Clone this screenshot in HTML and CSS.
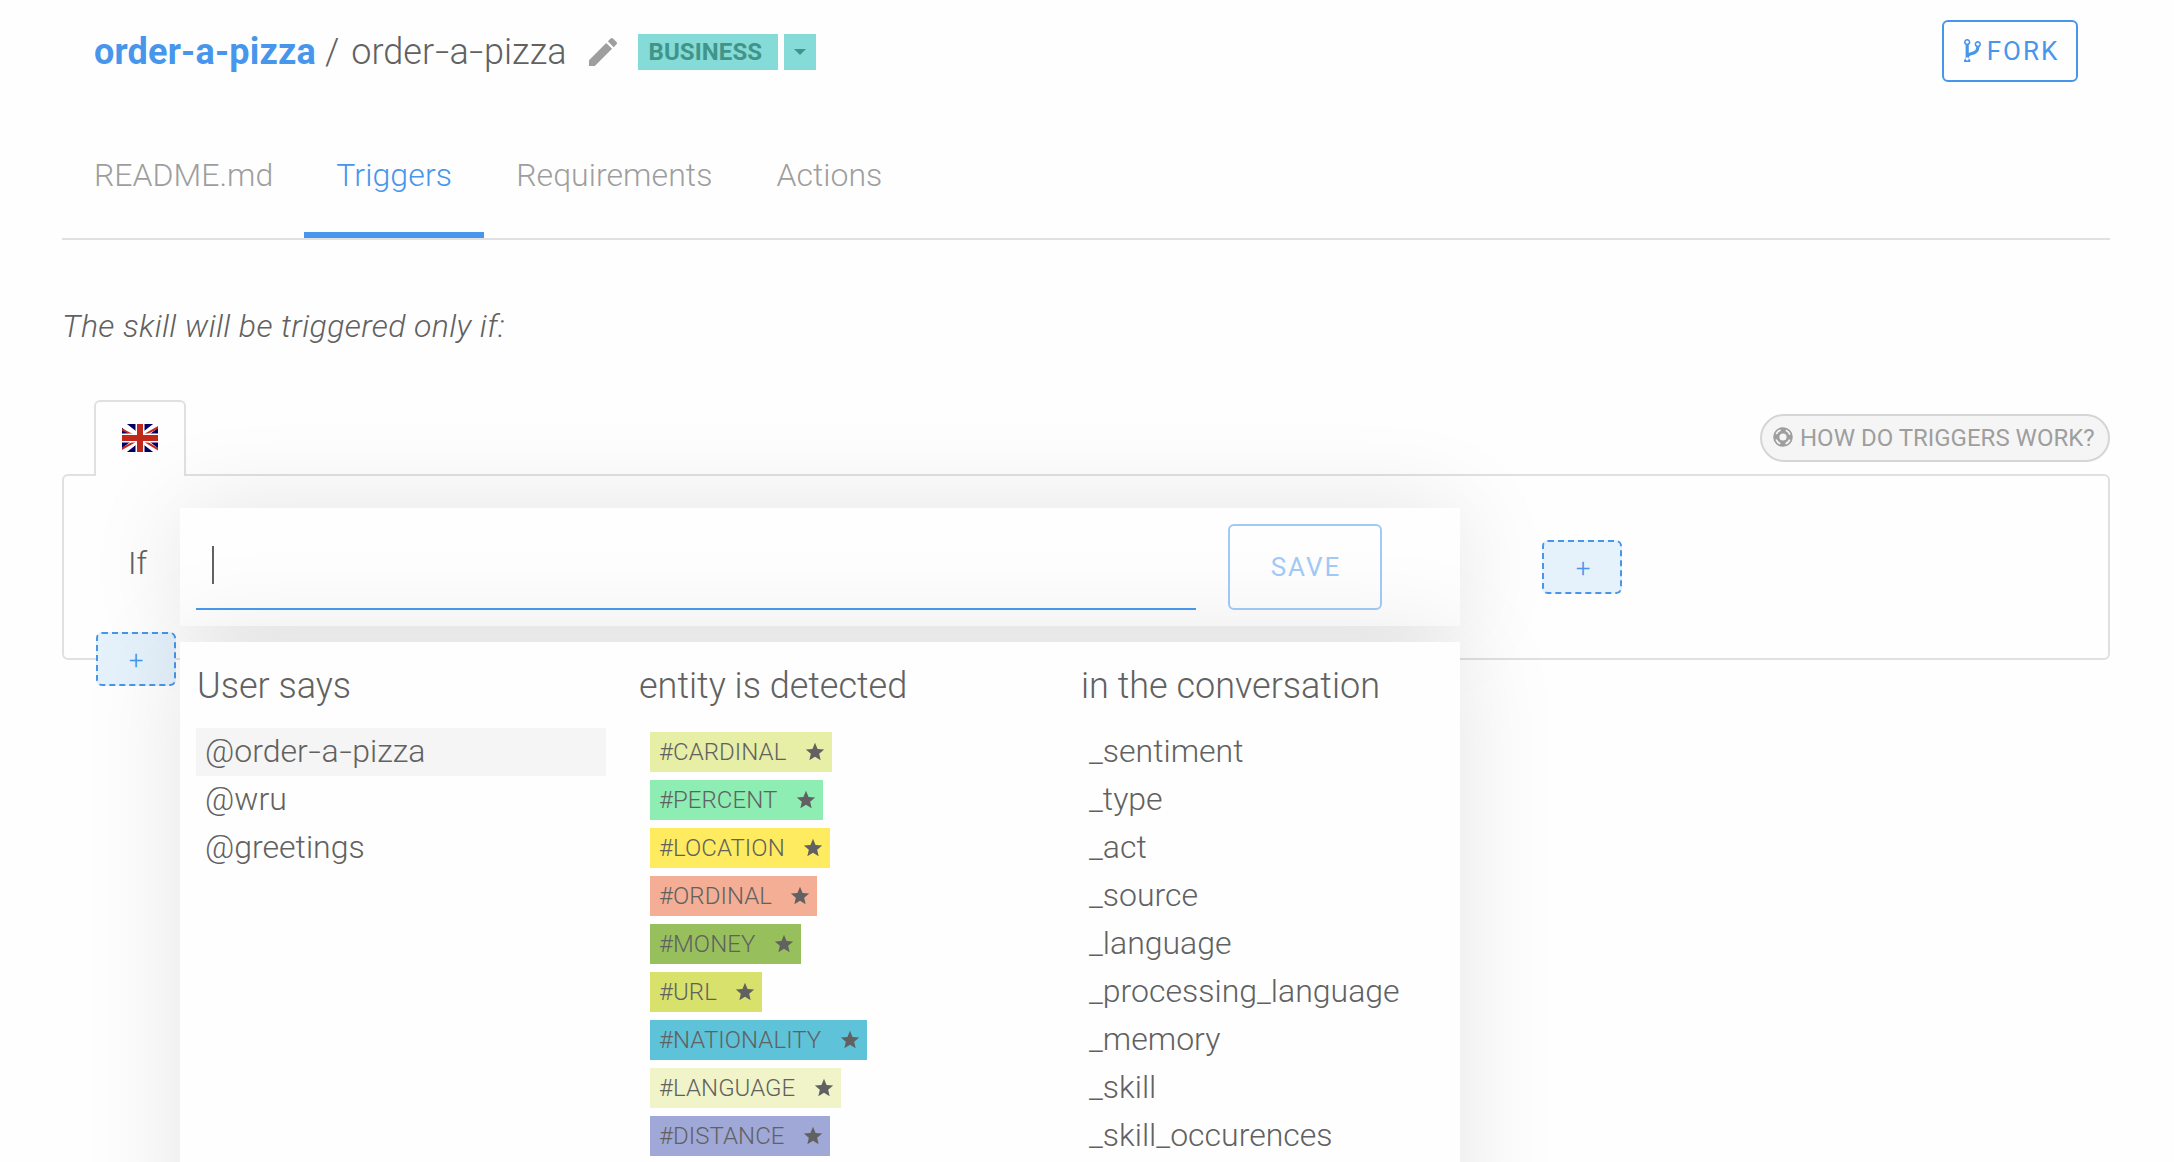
FILE: index.html
```html
<!DOCTYPE html>
<html lang="en">
<head>
<meta charset="utf-8">
<title>order-a-pizza</title>
<link rel="stylesheet" href="styles.css">
</head>
<body>
<svg class="defs" aria-hidden="true">
  <symbol id="star" viewBox="0 0 24 24"><path d="M12 17.27L18.18 21l-1.64-7.03L22 9.24l-7.19-.61L12 2 9.19 8.63 2 9.24l5.46 4.73L5.82 21z"/></symbol>
</svg>
<header class="header">
  <h1 class="title"><a class="owner">order-a-pizza</a><span class="slash">/</span><span>order<span class="hyphen">-</span>a<span class="hyphen">-</span>pizza</span></h1>
  <svg class="pencil" viewBox="3 3 18 18"><path d="M3 17.25V21h3.75L17.81 9.94l-3.75-3.75L3 17.25zM20.71 7.04c.39-.39.39-1.02 0-1.41l-2.34-2.34c-.39-.39-1.02-.39-1.41 0l-1.83 1.83 3.75 3.75 1.83-1.83z"/></svg>
  <span class="badge badge-label">BUSINESS</span>
  <span class="badge badge-caret"><svg viewBox="0 0 12 6"><path d="M0 0h12L6 6z"/></svg></span>
  <button class="button fork"><svg viewBox="0 0 1024 1408" preserveAspectRatio="none"><path d="M288 1216q0-40-28-68t-68-28-68 28-28 68 28 68 68 28 68-28 28-68zm0-1024q0-40-28-68t-68-28-68 28-28 68 28 68 68 28 68-28 28-68zm640 128q0-40-28-68t-68-28-68 28-28 68 28 68 68 28 68-28 28-68zm96 0q0 52-26 96.500t-70 69.500q-2 287-226 414-67 38-203 81-128 40-169.500 71t-41.500 100v26q44 25 70 69.500t26 96.500q0 80-56 136t-136 56-136-56-56-136q0-52 26-96.500t70-69.500v-820q-44-25-70-69.500t-26-96.500q0-80 56-136t136-56 136 56 56 136q0 52-26 96.500t-70 69.500v497q54-26 154-57 55-17 87.500-29.500t70.500-31 59-39.500 40.500-51 28-69.500 8.500-91.500q-44-25-70-69.500t-26-96.500q0-80 56-136t136-56 136 56 56 136z"/></svg><span>FORK</span></button>
</header>
<nav class="tabs">
  <a class="tab">README.md</a><a class="tab active">Triggers</a><a class="tab">Requirements</a><a class="tab">Actions</a>
</nav>
<main class="main">
  <p class="intro">The skill will be triggered only if:</p>
  <div class="toolbar">
    <div class="lang-tab">
      <svg class="flag" viewBox="0 0 36 28"><path fill="#006" d="M0 0h36v28H0z"/><path stroke="#fff" stroke-width="6" d="M0 0l36 28M36 0L0 28"/><path fill="#c8281e" d="M0 4.500l12 6h-4L0 6.500zM36 4.500L26 10h-4L36 2zM0 23.500l10-5.500h4L0 26zM36 24l-10-6h-4L36 26.500z"/><path stroke="#fff" stroke-width="9" d="M18 0v28M0 14h36"/><path stroke="#c0281c" stroke-width="6" d="M18 0v28M0 14h36"/></svg>
    </div>
    <a class="help"><svg viewBox="0 0 20 20"><circle cx="10" cy="10" r="6.700" fill="none" stroke="currentColor" stroke-width="6.200"/><circle cx="10" cy="10" r="7.300" fill="none" stroke="#f5f5f5" stroke-width="1.800" stroke-dasharray="6 5.467" stroke-dashoffset="-2.730"/></svg><span>HOW DO TRIGGERS WORK?</span></a>
  </div>
  <section class="rule">
    <span class="if">If</span>
    <button class="add add-and">+</button>
    <button class="add add-or">+</button>
    <div class="popup">
      <div class="editor">
        <div class="input"><span class="cursor"></span></div>
        <button class="button save">SAVE</button>
      </div>
      <div class="suggest">
        <div class="col">
          <h2>User says</h2>
          <div class="row selected"><span>@order<span class="hyphen">-</span>a<span class="hyphen">-</span>pizza</span></div>
          <div class="row">@wru</div>
          <div class="row">@greetings</div>
        </div>
        <div class="col">
          <h2>entity is detected</h2>
          <div class="row"><span class="tag cardinal">#CARDINAL<svg><use href="#star"/></svg></span></div>
          <div class="row"><span class="tag percent">#PERCENT<svg><use href="#star"/></svg></span></div>
          <div class="row"><span class="tag location">#LOCATION<svg><use href="#star"/></svg></span></div>
          <div class="row"><span class="tag ordinal">#ORDINAL<svg><use href="#star"/></svg></span></div>
          <div class="row"><span class="tag money">#MONEY<svg><use href="#star"/></svg></span></div>
          <div class="row"><span class="tag url">#URL<svg><use href="#star"/></svg></span></div>
          <div class="row"><span class="tag nationality">#NATIONALITY<svg><use href="#star"/></svg></span></div>
          <div class="row"><span class="tag language">#LANGUAGE<svg><use href="#star"/></svg></span></div>
          <div class="row"><span class="tag distance">#DISTANCE<svg><use href="#star"/></svg></span></div>
        </div>
        <div class="col">
          <h2>in the conversation</h2>
          <div class="row">_sentiment</div>
          <div class="row">_type</div>
          <div class="row">_act</div>
          <div class="row">_source</div>
          <div class="row">_language</div>
          <div class="row">_processing_language</div>
          <div class="row">_memory</div>
          <div class="row">_skill</div>
          <div class="row">_skill_occurences</div>
        </div>
      </div>
    </div>
  </section>
</main>
</body>
</html>
```
FILE: styles.css
```css
* { box-sizing: border-box; }
html, body { height: 100%; overflow: hidden; }
body {
  margin: 0;
  background: #fefefe;
  color: #616161;
  font-family: Roboto, sans-serif;
  font-weight: 300;
  font-size: 32px;
}
.defs { position: absolute; width: 0; height: 0; }
h1, h2, p { margin: 0; font-weight: 300; }
button { font-family: inherit; padding: 0; }
.hyphen { display: inline-block; margin: 0 .07em; transform: scaleX(1.4); }

.header { display: flex; align-items: center; height: 104px; padding: 0 96px 0 94px; }
.title { display: flex; gap: 12px; font-size: 36px; line-height: 48px; white-space: nowrap; }
.owner { color: #4796ec; font-weight: 700; letter-spacing: .2px; margin-right: -3px; }
.pencil { width: 28px; height: 28px; margin-left: 23px; fill: #9e9e9e; }
.badge {
  display: flex; align-items: center; justify-content: center;
  width: 140px; height: 36px; margin-left: 21px;
  background: #84dbd7; color: #429488;
  font-size: 24px; font-weight: 700; letter-spacing: .1px;
}
.badge-label { justify-content: flex-start; padding-left: 10px; }
.badge-caret { width: 32px; margin-left: 6px; }
.badge-caret svg { width: 12px; height: 6px; fill: currentColor; }
.button {
  display: flex; align-items: center; justify-content: center;
  border: 2px solid #4796ec; border-radius: 6px;
  background: transparent; color: #4796ec;
  font-size: 26px; letter-spacing: 2px;
}
.fork { width: 136px; height: 62px; margin: 0 0 2px auto; padding-left: 3px; gap: 6px; }
.fork svg { width: 17px; height: 23px; margin-top: -2px; fill: currentColor; }

.tabs { display: flex; height: 136px; margin: 0 64px 0 62px; border-bottom: 2px solid #e0e0e0; }
.tab { padding: 51px 32px 0; height: 134px; line-height: 40px; color: #9e9e9e; }
.tab:first-child { margin-right: -1px; }
.tab.active { color: #4796ec; border-bottom: 6px solid #4796ec; letter-spacing: .12px; }
.tab:nth-child(3) { letter-spacing: .06px; }

.main { padding: 0 64px 0 62px; }
.intro { padding-top: 66px; line-height: 40px; font-style: italic; letter-spacing: .39px; }
.toolbar { display: flex; justify-content: space-between; align-items: flex-start; height: 128px; padding-top: 54px; padding-left: 32px; }
.lang-tab {
  position: relative; z-index: 1;
  width: 92px; height: 76px; padding: 22px 0 0 26px;
  border: 2px solid #e0e0e0; border-bottom: 0; border-radius: 6px 6px 0 0;
  background: #fefefe;
}
.flag { display: block; width: 36px; height: 28px; }
.help {
  display: flex; align-items: center; gap: 7px;
  width: 350px; height: 48px; margin-top: 14px; padding-left: 11px;
  border: 2px solid #d5d5d5; border-radius: 24px;
  background: #f5f5f5; color: #9e9e9e;
  font-size: 24px; font-weight: 400; white-space: nowrap;
}
.help svg { width: 20px; height: 20px; margin-top: -2px; }

.rule { position: relative; height: 186px; border: 2px solid #e0e0e0; border-radius: 6px; }
.if { display: block; padding: 67px 0 0 64px; line-height: 40px; }
.add {
  position: absolute; width: 80px; height: 54px;
  border: 2px dashed #4796ec; border-radius: 6px;
  background: #e5f2fc; color: #4796ec;
  font-size: 26px; font-weight: 300; line-height: 52px;
}
.add-and { left: 1478px; top: 64px; padding-left: 2px; }
.add-or { left: 32px; top: 156px; }
.popup { position: absolute; z-index: 2; left: 116px; top: 32px; width: 1280px; }
.editor {
  display: flex; gap: 32px; height: 118px; padding: 16px;
  background: #fefefe; box-shadow: 0 0 96px rgba(0, 0, 0, .1);
}
.input { width: 1000px; height: 86px; padding: 22px 16px; border-bottom: 2px solid #4796ec; }
.cursor { display: block; width: 2px; height: 38px; background: #616161; }
.save { width: 154px; height: 86px; padding-left: 2px; opacity: .5; }
.suggest {
  display: grid; grid-template-columns: repeat(3, 410px); gap: 32px;
  height: 620px; margin-top: 16px; padding: 0 16px;
  background: #fefefe; box-shadow: 0 0 96px rgba(0, 0, 0, .1);
}
.col h2 { height: 86px; padding: 20px 0 0 1px; font-size: 36px; line-height: 48px; white-space: nowrap; }
.row { display: flex; height: 48px; padding: 4px 0 4px 9px; line-height: 38px; }
.selected { background: #f5f5f5; }
.tag { display: flex; align-items: center; height: 40px; margin-left: 3px; padding: 0 6px 0 9px; font-size: 24px; line-height: 40px; letter-spacing: .06px; }
.tag svg { width: 22px; height: 22px; margin-left: 17.500px; fill: #616161; }
.cardinal { background: #e7eea5; }
.percent { background: #8eedb3; }
.location { background: #ffeb5f; }
.ordinal { background: #f3ae95; }
.money { background: #97c05c; }
.url { background: #d8e16c; }
.nationality { background: #5ec2d8; }
.language { background: #f0f4c8; }
.distance { background: #a0a8d7; }
```
